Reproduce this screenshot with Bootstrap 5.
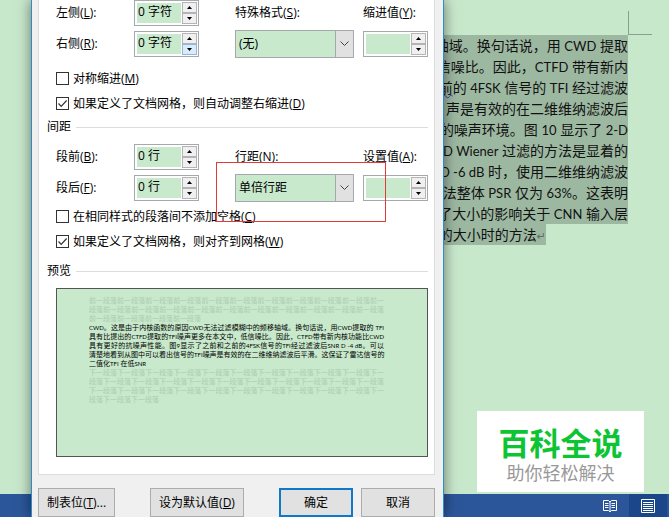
<!DOCTYPE html>
<html lang="zh-CN">
<head>
<meta charset="utf-8">
<meta name="viewport" content="width=device-width, initial-scale=1">
<title>段落</title>
<link href="https://cdn.jsdelivr.net/npm/bootstrap@5.3.0/dist/css/bootstrap.min.css" rel="stylesheet">
<style>
:root { --page: #c8e8cc; --field: #c8e9cc; --face: #f0f0f0; --edge: #acacac; }
body { background: var(--page); color: #000; font: 12px/20px "Open Sans", "Noto Sans CJK SC", sans-serif; }
.desk { min-height: 100vh; }
/* document behind the dialog */
.doc-page { padding: 11px 17px 0 50%; }
.crop-mark { width: 24px; height: 24px; border-left: 1px solid #8a9f8d; border-bottom: 1px solid #8a9f8d; }
.doc-text { margin-right: 24px; font: 14px/21px Lato, "Noto Sans CJK SC", sans-serif; color: #111; }
.doc-text p { margin: 0; height: 21px; background: #9db8a1; white-space: nowrap; }
.doc-text p.last { margin-right: 82px; }
.doc-text .en { font-size: 13px; }
.doc-text .ret { color: #5d6f60; font: 11px/20px "DejaVu Sans", sans-serif; }
.squiggle { text-decoration: underline wavy #2f3fd0 1px; }
.status { height: 23px; background: #2b579a; padding-right: 2px; }
.status button { width: 38px; border: 0; padding: 0; background: none; }
.status button.on { background: #19478a; }
.brand { right: 25px; bottom: 25px; width: 167px; height: 81px; background: #fff; padding-top: 4px; }
.brand strong { font: 700 31px/36px "Noto Sans CJK SC", sans-serif; color: #0dc433; }
.brand span { font: 18px/24px "Noto Sans CJK SC", sans-serif; color: #999; }
/* dialog */
.dlg { left: 31px; right: 225px; background: var(--face); border: solid #2f8ccb; border-width: 0 1px; box-shadow: 0 0 13px rgba(0,0,0,.5); padding: 0 8px 0 6px; }
.pane { background: #fff; border: 1px solid #dcdcdc; border-top: 0; padding: 0 6px 17px 8px; }
.opts { display: grid; grid-template-columns: 78px 65px minmax(0,1fr) 119px 9px 65px; grid-template-rows: 26px 28px; row-gap: 4px; align-items: center; padding-left: 9px; }
.opts .c4 { grid-column: 4; }
.opts .c5 { grid-column: 6; }
.spacing-opts { padding-top: 6px; padding-bottom: 2px; }
.spin { height: 26px; border: 1px solid #a5a9ad; background: #fff; padding: 1px; }
.spin input { min-width: 0; border: 0; background: var(--field); padding: 0 0 2px 1px; outline: 0; line-height: 18px; margin: 1px; }
.spin .arrows { width: 15px; }
.spin .arrows button { border: 1px solid #b4b4b4; background: var(--face); padding: 0; line-height: 0; }
.spin .arrows button.hot { background: #dcebfa; border-color: #8fb8df; }
.combo { height: 28px; border: 1px solid #a5a9ad; background: var(--field); }
.combo select { appearance: none; border: 0; background: transparent; padding: 0 20px 0 3px; color: #000; outline: 0; }
.combo .drop { right: 0; top: 0; bottom: 0; width: 18px; background: #e1e1e1; border-left: 1px solid #a5a9ad; pointer-events: none; }
.tick { height: 25px; padding-left: 9px; }
.tick input { appearance: none; width: 13px; height: 13px; border: 1px solid #333; background: #fff; margin: 0 4px 0 0; }
.tick input:checked { background: #fff url("data:image/svg+xml,%3Csvg xmlns='http://www.w3.org/2000/svg' viewBox='0 0 11 11'%3E%3Cpath d='M1.5 5.5 4.2 8.3 9.6 2.5' fill='none' stroke='%23333' stroke-width='1.2'/%3E%3C/svg%3E"); }
.sect { font: inherit; height: 22px; margin: 0; }
.sect::after { content: ""; flex: 1; height: 1px; background: #dcdcdc; margin-left: 5px; }
.sect-preview { margin-top: 6px; }
.callout-box { left: 169px; right: 42px; top: 46px; height: 60px; border: 1px solid #dc3c3c; pointer-events: none; }
.preview { margin: 6px 0 0 9px; border: 1px solid #555; background: var(--field); padding: 7px 43px 7px 32px; font: 7px/9px Lato, "Noto Sans CJK SC", sans-serif; overflow: hidden; }
.preview p { margin: 0; height: 9px; white-space: nowrap; text-align-last: justify; }
.preview p.end { text-align-last: left; }
.preview .en { font-size: 6px; }
.preview .dim { color: #adccb1; }
.feet { padding-top: 13px; }
.feet button { height: 29px; border: 1px solid var(--edge); background: #e1e1e1; padding: 0; color: #000; }
.feet .w1 { width: 77px; }
.feet .w2 { width: 94px; }
.feet .w3 { width: 74px; }
.feet .go { border: 2px solid #0f78c8; }
</style>
<script src="https://cdn.jsdelivr.net/npm/bootstrap@5.3.0/dist/js/bootstrap.bundle.min.js"></script>
</head>
<body>
<div class="desk position-relative d-flex flex-column overflow-hidden">
  <main class="doc-page flex-grow-1">
    <div class="crop-mark ms-auto"></div>
    <div class="doc-text text-end">
      <p>轴域。换句话说，用 <span class="en">CWD</span> 提取</p>
      <p>信噪比。因此，<span class="en">CTFD</span> 带有新内</p>
      <p><span class="squiggle">前</span>的 <span class="en">4FSK</span> 信号的 <span class="en">TFI</span> 经过滤波</p>
      <p>声是有效的在二维维纳滤波后</p>
      <p>的噪声环境。图 <span class="en">10</span> 显示了 <span class="en">2-D</span></p>
      <p><span class="en">2-D Wiener</span> 过滤的方法是显着的</p>
      <p><span class="en">D -6 dB</span> 时，使用二维维纳滤波</p>
      <p>法整体 <span class="en">PSR</span> 仅为 <span class="en">63%</span>。这表明</p>
      <p>了大小的影响关于 <span class="en">CNN</span> 输入层</p>
      <p class="last">的大小时的方法<span class="ret">↵</span></p>
    </div>
  </main>
  <footer class="status d-flex justify-content-end">
    <button type="button" aria-label="阅读视图"><svg width="14" height="14" viewBox="0 0 14 14" fill="none" stroke="#fff"><path d="M.5 1.5H5.5L7 3 8.5 1.5H13.5V11.5H8.5L7 13 5.5 11.5H.5ZM7 3V13M2 4.5H5.5M2 6.5H5.5M2 8.5H5.5M8.5 4.5H12M8.5 6.5H12M8.5 8.5H12"/></svg></button>
    <button type="button" class="on" aria-label="页面视图"><svg width="14" height="14" viewBox="0 0 14 14" fill="none" stroke="#fff"><path d="M.5 .5H13.5V13.5H.5ZM2 3.5H12M2 5.5H12M2 7.5H12M2 9.5H12M2 11.5H12"/></svg></button>
  </footer>
  <div class="brand position-absolute d-flex flex-column align-items-center justify-content-center"><strong>百科全说</strong><span>助你轻松解决</span></div>

  <form class="dlg position-absolute top-0 bottom-0 d-flex flex-column" onsubmit="return false">
    <div class="pane flex-grow-1 d-flex flex-column">
      <div class="opts">
        <label for="il">左侧(<u>L</u>):</label>
        <div class="spin d-flex"><input id="il" class="flex-grow-1 w-100" value="0 字符"><span class="arrows d-flex flex-column flex-shrink-0"><button type="button" class="flex-fill" aria-label="增加"><svg width="5" height="3"><path d="M0 3 2.5 0 5 3Z"/></svg></button><button type="button" class="flex-fill" aria-label="减少"><svg width="5" height="3"><path d="M0 0H5L2.5 3Z"/></svg></button></span></div>
        <label class="c4" for="sp">特殊格式(<u>S</u>):</label>
        <label class="c5" for="iv">缩进值(<u>Y</u>):</label>
        <label for="ir">右侧(<u>R</u>):</label>
        <div class="spin d-flex"><input id="ir" class="flex-grow-1 w-100" value="0 字符"><span class="arrows d-flex flex-column flex-shrink-0"><button type="button" class="flex-fill" aria-label="增加"><svg width="5" height="3"><path d="M0 3 2.5 0 5 3Z"/></svg></button><button type="button" class="flex-fill hot" aria-label="减少"><svg width="5" height="3"><path d="M0 0H5L2.5 3Z"/></svg></button></span></div>
        <div class="combo c4 position-relative"><select id="sp" class="w-100 h-100"><option>(无)</option></select><span class="drop position-absolute d-flex align-items-center justify-content-center"><svg width="9" height="6" fill="none" stroke="#444"><path d="M.5 .5 4.5 4.5 8.5 .5"/></svg></span></div>
        <div class="spin c5 d-flex"><input id="iv" class="flex-grow-1 w-100"><span class="arrows d-flex flex-column flex-shrink-0"><button type="button" class="flex-fill" aria-label="增加"><svg width="5" height="3"><path d="M0 3 2.5 0 5 3Z"/></svg></button><button type="button" class="flex-fill" aria-label="减少"><svg width="5" height="3"><path d="M0 0H5L2.5 3Z"/></svg></button></span></div>
      </div>
      <label class="tick d-flex align-items-center mt-2"><input type="checkbox"><span>对称缩进(<u>M</u>)</span></label>
      <label class="tick d-flex align-items-center"><input type="checkbox" checked><span>如果定义了文档网格，则自动调整右缩进(<u>D</u>)</span></label>
      <section class="position-relative">
        <h2 class="sect d-flex align-items-center">间距</h2>
        <div class="opts spacing-opts">
          <label for="sb">段前(<u>B</u>):</label>
          <div class="spin d-flex"><input id="sb" class="flex-grow-1 w-100" value="0 行"><span class="arrows d-flex flex-column flex-shrink-0"><button type="button" class="flex-fill" aria-label="增加"><svg width="5" height="3"><path d="M0 3 2.5 0 5 3Z"/></svg></button><button type="button" class="flex-fill" aria-label="减少"><svg width="5" height="3"><path d="M0 0H5L2.5 3Z"/></svg></button></span></div>
          <label class="c4" for="ls">行距(<u>N</u>):</label>
          <label class="c5" for="lv">设置值(<u>A</u>):</label>
          <label for="sa">段后(<u>F</u>):</label>
          <div class="spin d-flex"><input id="sa" class="flex-grow-1 w-100" value="0 行"><span class="arrows d-flex flex-column flex-shrink-0"><button type="button" class="flex-fill" aria-label="增加"><svg width="5" height="3"><path d="M0 3 2.5 0 5 3Z"/></svg></button><button type="button" class="flex-fill" aria-label="减少"><svg width="5" height="3"><path d="M0 0H5L2.5 3Z"/></svg></button></span></div>
          <div class="combo c4 position-relative"><select id="ls" class="w-100 h-100"><option>单倍行距</option></select><span class="drop position-absolute d-flex align-items-center justify-content-center"><svg width="9" height="6" fill="none" stroke="#444"><path d="M.5 .5 4.5 4.5 8.5 .5"/></svg></span></div>
          <div class="spin c5 d-flex"><input id="lv" class="flex-grow-1 w-100"><span class="arrows d-flex flex-column flex-shrink-0"><button type="button" class="flex-fill" aria-label="增加"><svg width="5" height="3"><path d="M0 3 2.5 0 5 3Z"/></svg></button><button type="button" class="flex-fill" aria-label="减少"><svg width="5" height="3"><path d="M0 0H5L2.5 3Z"/></svg></button></span></div>
        </div>
        <label class="tick d-flex align-items-center"><input type="checkbox"><span>在相同样式的段落间不添加空格(<u>C</u>)</span></label>
        <label class="tick d-flex align-items-center"><input type="checkbox" checked><span>如果定义了文档网格，则对齐到网格(<u>W</u>)</span></label>
        <div class="callout-box position-absolute"></div>
      </section>
      <h2 class="sect sect-preview d-flex align-items-center">预览</h2>
      <div class="preview flex-grow-1">
        <div class="dim">
          <p>前一段落前一段落前一段落前一段落前一段落前一段落前一段落前一段落前一段落前一段落前一</p>
          <p>段落前一段落前一段落前一段落前一段落前一段落前一段落前一段落前一段落前一段落前一段落</p>
          <p class="end">前一段落前一段落前一段落前一段落</p>
        </div>
        <p><span class="en">CWD</span>。这是由于内核函数的原因<span class="en">CWD</span>无法过滤模糊中的频移轴域。换句话说，用<span class="en">CWD</span>提取的 <span class="en">TFI</span></p>
        <p>具有比提出的<span class="en">CTFD</span>提取的<span class="en">TFI</span>噪声更多在本文中，低信噪比。因此，<span class="en">CTFD</span>带有新内核功能比<span class="en">CWD</span></p>
        <p>具有更好的抗噪声性能。图<span class="en">9</span>显示了之前和之前的<span class="en">4FSK</span>信号的<span class="en">TFI</span>经过滤波后<span class="en">SNR D -4 dB</span>。可以</p>
        <p>清楚地看到从图中可以看出信号的<span class="en">TFI</span>噪声是有效的在二维维纳滤波后平滑。这保证了雷达信号的</p>
        <p class="end">二值化<span class="en">TFI</span> 在低<span class="en">SNR</span></p>
        <div class="dim">
          <p>下一段落下一段落下一段落下一段落下一段落下一段落下一段落下一段落下一段落下一段落下一</p>
          <p>段落下一段落下一段落下一段落下一段落下一段落下一段落下一段落下一段落下一段落下一段落</p>
          <p>下一段落下一段落下一段落下一段落下一段落下一段落下一段落下一段落下一段落下一段落下一</p>
          <p class="end">段落下一段落下一段落</p>
        </div>
      </div>
    </div>
    <div class="feet d-flex">
      <button type="button" class="w1">制表位(<u>T</u>)...</button>
      <button type="button" class="w2 mx-auto">设为默认值(<u>D</u>)</button>
      <button type="submit" class="w3 go">确定</button>
      <button type="button" class="w3 ms-2">取消</button>
    </div>
  </form>
</div>
</body>
</html>
